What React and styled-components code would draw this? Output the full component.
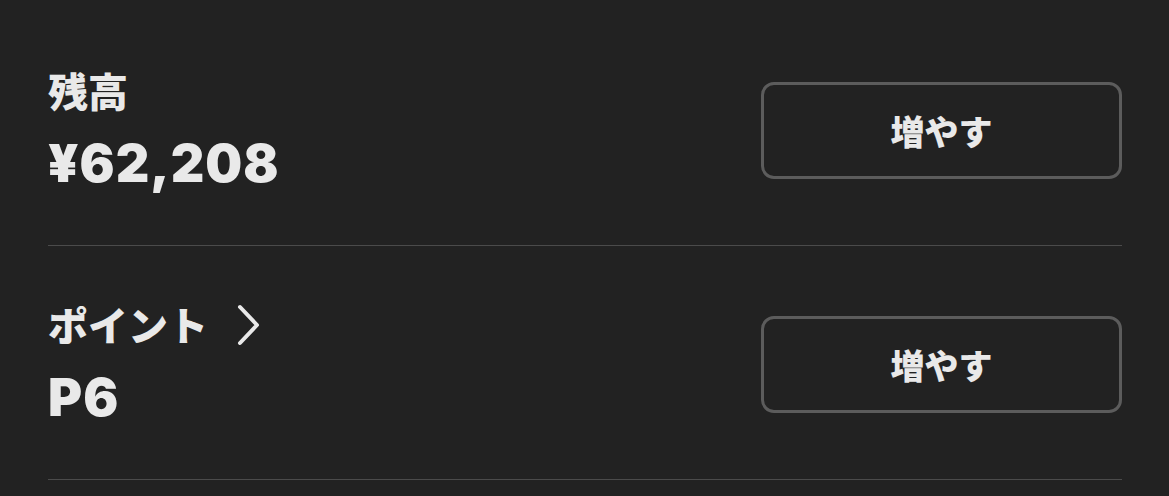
import React from 'react'
import styled, { createGlobalStyle } from 'styled-components'

const GlobalStyle = createGlobalStyle`
  html, body {
    margin: 0;
    padding: 0;
    background: #222222;
  }
  body {
    font-family: Inter, "Noto Sans CJK JP", sans-serif;
    color: #e9e9e9;
  }
`

const Page = styled.div`
  width: 1169px;
  height: 496px;
  overflow: hidden;
  box-sizing: border-box;
  padding: 12px 47px 0 48px;
  background: #222222;
`

const Row = styled.div`
  height: 233px;
  display: flex;
  align-items: center;
  justify-content: space-between;
  border-bottom: 1px solid #4b4b4b;
`

const Info = styled.div`
  display: flex;
  flex-direction: column;
  gap: 20px;
  margin-top: 2px;
`

const Label = styled.div`
  display: flex;
  align-items: center;
  gap: 28px;
  font-family: "Noto Sans CJK JP", sans-serif;
  font-weight: 900;
  font-size: 40px;
  line-height: 48px;
  color: #e9e9e9;
`

const Chevron = styled.svg`
  width: 26px;
  height: 42px;
  margin-top: 2px;
`

const Value = styled.div`
  font-family: Inter, "Liberation Sans", sans-serif;
  font-weight: 900;
  font-size: 52px;
  line-height: 60px;
  letter-spacing: 1px;
  color: #e9e9e9;
`

const Button = styled.button`
  width: 361px;
  height: 97px;
  margin-top: 3px;
  box-sizing: border-box;
  border: 3px solid #5c5c5c;
  border-radius: 13px;
  background: transparent;
  color: #e9e9e9;
  font-family: "Noto Sans CJK JP", sans-serif;
  font-weight: 900;
  font-size: 34px;
  cursor: pointer;
`

function ChevronRight() {
  return (
    <Chevron viewBox="0 0 26 42" fill="none">
      <path
        d="M4 3 L21 21 L4 39"
        stroke="#e9e9e9"
        strokeWidth="4"
        strokeLinecap="round"
        strokeLinejoin="round"
      />
    </Chevron>
  )
}

const items = [
  { label: '残高', value: '¥62,208', link: false },
  { label: 'ポイント', value: 'P6', link: true },
]

export default function App() {
  return (
    <>
      <GlobalStyle />
      <Page>
        {items.map(item => (
          <Row key={item.label}>
            <Info>
              <Label>
                {item.label}
                {item.link && <ChevronRight />}
              </Label>
              <Value>{item.value}</Value>
            </Info>
            <Button>増やす</Button>
          </Row>
        ))}
      </Page>
    </>
  )
}
